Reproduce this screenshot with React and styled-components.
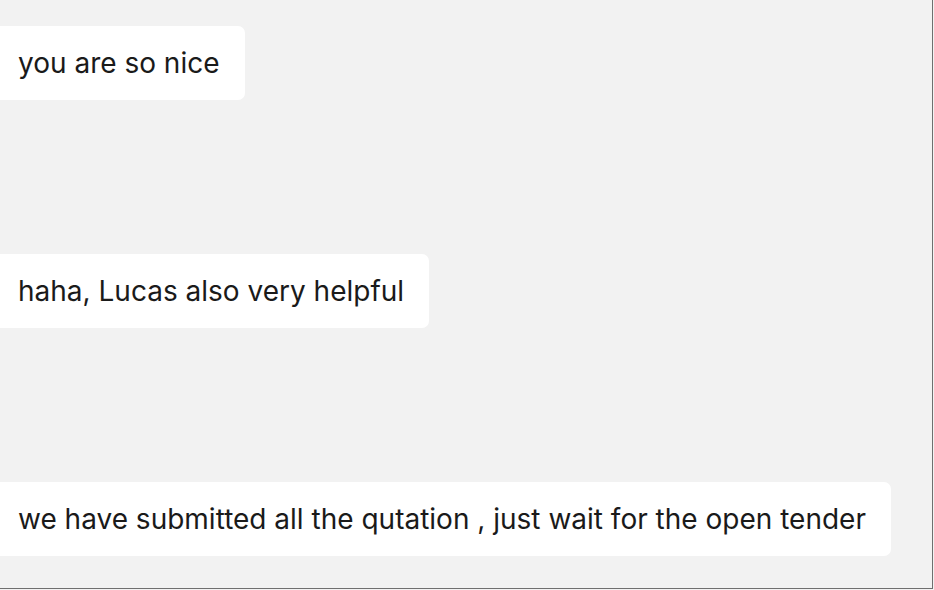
import React from 'react'
import styled, { createGlobalStyle } from 'styled-components'

const GlobalStyle = createGlobalStyle`
  html, body {
    margin: 0;
    padding: 0;
    background: #f2f2f2;
  }
`

const Frame = styled.div`
  box-sizing: border-box;
  width: 933px;
  height: 589px;
  background: #f2f2f2;
  border-right: 1px solid #6f6f6f;
  border-bottom: 1px solid #6f6f6f;
  overflow: hidden;
  display: flex;
  flex-direction: column;
  align-items: flex-start;
  gap: 154px;
  padding-top: 26px;
`

const Bubble = styled.div`
  box-sizing: border-box;
  height: 74px;
  display: flex;
  align-items: center;
  margin-left: -8px;
  padding: 0 25px 0 26px;
  background: #fff;
  border-radius: 7px;
  color: #1a1a1a;
  font-family: Inter, 'Noto Sans', sans-serif;
  font-size: 28px;
  white-space: nowrap;
`

const messages = [
  'you are so nice',
  'haha, Lucas also very helpful',
  'we have submitted all the qutation , just wait for the open tender',
]

export default function App() {
  return (
    <>
      <GlobalStyle />
      <Frame>
        {messages.map(m => (
          <Bubble key={m}>{m}</Bubble>
        ))}
      </Frame>
    </>
  )
}
